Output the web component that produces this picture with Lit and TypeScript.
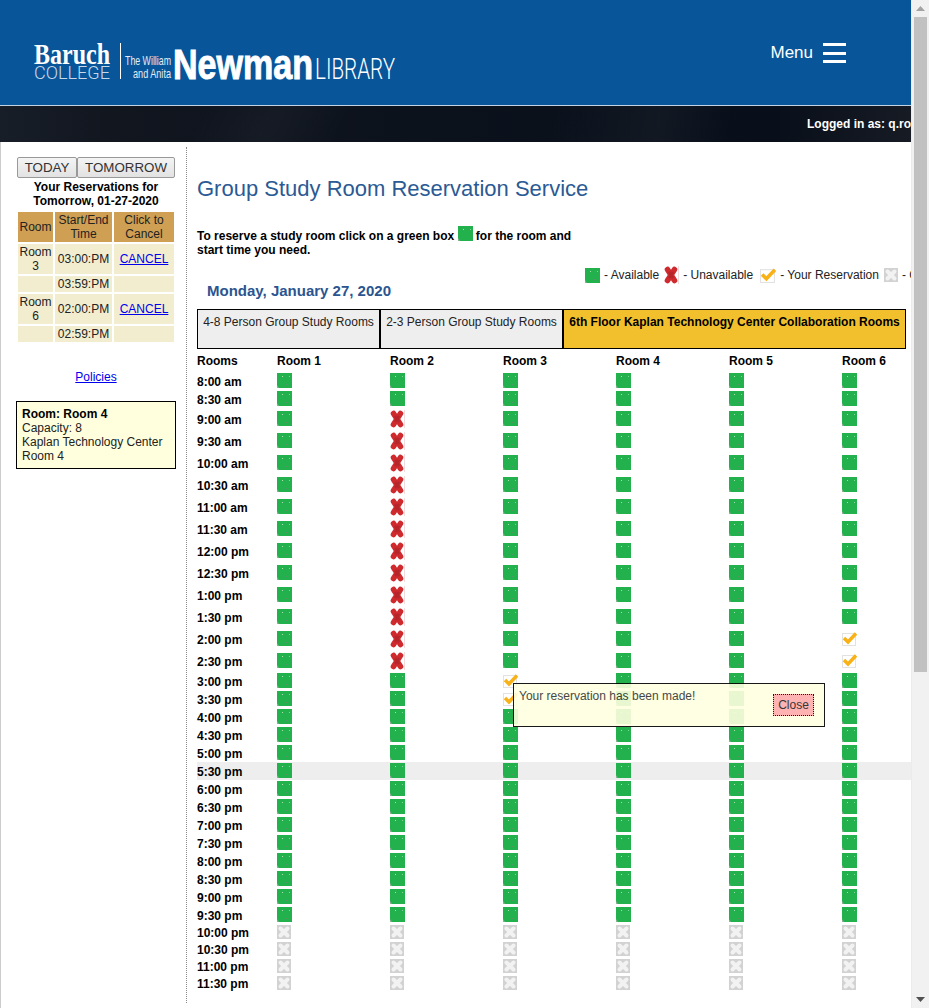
import { LitElement, css, html, svg } from "lit";
import { customElement } from "lit/decorators.js";

type Cell = "a" | "x" | "c" | "g";

const TIMES = [
  "8:00 am", "8:30 am", "9:00 am", "9:30 am", "10:00 am", "10:30 am", "11:00 am", "11:30 am",
  "12:00 pm", "12:30 pm", "1:00 pm", "1:30 pm", "2:00 pm", "2:30 pm", "3:00 pm", "3:30 pm",
  "4:00 pm", "4:30 pm", "5:00 pm", "5:30 pm", "6:00 pm", "6:30 pm", "7:00 pm", "7:30 pm",
  "8:00 pm", "8:30 pm", "9:00 pm", "9:30 pm", "10:00 pm", "10:30 pm", "11:00 pm", "11:30 pm",
];

const ROOMS = [1, 2, 3, 4, 5, 6];

function cellFor(row: number, room: number): Cell {
  if (row >= 28) return "g";
  if (room === 2 && row >= 2 && row <= 13) return "x";
  if (room === 3 && (row === 14 || row === 15)) return "c";
  if (room === 6 && (row === 12 || row === 13)) return "c";
  return "a";
}

function rowClass(row: number) {
  if (row >= 28) return "row short";
  if (row >= 2 && row <= 13) return "row tall";
  return row === 19 ? "row hl" : "row";
}

const green = svg`<svg class="ico" width="15" height="15" viewBox="0 0 15 15">
  <rect width="15" height="15" fill="#22b14c"/>
  <path d="M0 12v3h2z" fill="#8fae98"/>
  <rect x="5" y="3" width="1" height="1" fill="#a8e0b8"/>
  <rect x="12" y="3" width="1" height="1" fill="#7fd29a"/>
  <rect x="9" y="11" width="1" height="1" fill="#5f8f6e"/>
</svg>`;

const red = svg`<svg class="ico" width="15" height="18" viewBox="0 0 15 18">
  <path d="M3.500 3.500 10.500 14.500M10.500 3.500 3.500 14.500" stroke="#cf2a2e" stroke-width="5.600" stroke-linecap="round" fill="none"/>
  <path d="M5 6 9 12M9 6 5 12" stroke="#b5262a" stroke-width="2.400" fill="none"/>
  <rect x="14" y="0" width="1" height="18" fill="#f0dcdc"/>
</svg>`;

const check = svg`<svg class="ico chk" width="15" height="15" viewBox="0 0 15 15">
  <rect x=".5" y="2.500" width="13" height="12" fill="#fff" stroke="#e2e2e2"/>
  <path d="M2 7 6 11 14 2.500" stroke="#f8b116" stroke-width="3.400" fill="none"/>
</svg>`;

const closed = svg`<svg class="ico" width="14" height="14" viewBox="0 0 14 14">
  <rect width="14" height="14" fill="#d2d2d2"/>
  <path d="M3.500 3.500 10.500 10.500M10.500 3.500 3.500 10.500" stroke="#f2f2f2" stroke-width="4" stroke-linecap="round"/>
</svg>`;

const ICONS = { a: green, x: red, c: check, g: closed };

@customElement("app-root")
export class AppRoot extends LitElement {
  static styles = css`
    :host {
      display: block;
      position: relative;
      height: 1008px;
      overflow: hidden;
      font-family: "Liberation Sans", Arial, sans-serif;
      font-size: 12px;
      line-height: 14px;
      color: #000;
      background: #fff;
    }
    .frame {
      display: flex;
      height: 1008px;
    }
    .page {
      width: 912px;
      flex: none;
      overflow: hidden;
    }
    .scrollbar {
      width: 17px;
      flex: none;
      background: #f1f1f1;
      display: flex;
      flex-direction: column;
      align-items: center;
      box-shadow: -1px 0 0 #ebebeb;
    }
    .arrow {
      height: 17px;
      width: 100%;
      display: flex;
      align-items: center;
      justify-content: center;
      flex: none;
    }
    .thumb {
      width: 13px;
      height: 655px;
      background: #c1c1c1;
      flex: none;
    }
    .spacer {
      flex: 1;
    }
    .top {
      height: 105px;
      background: #08559a;
      display: flex;
      justify-content: space-between;
      align-items: flex-start;
      border-bottom: 1px solid #c3d3e3;
    }
    .logo {
      display: block;
    }
    .menu {
      display: flex;
      align-items: center;
      gap: 10px;
      margin: 43px 66px 0 0;
      color: #fff;
      font-size: 17px;
      line-height: 20px;
    }
    .burger {
      width: 23px;
      height: 20px;
      display: flex;
      flex-direction: column;
      justify-content: space-between;
    }
    .burger i {
      display: block;
      height: 3px;
      background: #fff;
    }
    .band {
      box-sizing: border-box;
      height: 36px;
      padding-bottom: 1px;
      display: flex;
      align-items: center;
      justify-content: flex-end;
      overflow: hidden;
      background:
        linear-gradient(115deg, transparent 0 22%, rgba(255, 255, 255, 0.03) 30%, transparent 38%),
        linear-gradient(100deg, transparent 60%, rgba(255, 255, 255, 0.035) 72%, transparent 80%),
        linear-gradient(90deg, #181e28 0, #11161f 12%, #0c121c 45%, #090f1a 85%, #161b24 100%);
    }
    .who {
      width: 105px;
      flex: none;
      color: #fff;
      font-weight: bold;
      white-space: nowrap;
    }
    .body {
      display: flex;
      align-items: flex-start;
    }
    .side {
      box-sizing: border-box;
      flex: none;
      width: 187px;
      height: 866px;
      border-left: 1px solid #ccc;
      padding: 15px 11px 0 15px;
      position: relative;
    }
    .side::after {
      content: "";
      position: absolute;
      right: 0;
      top: 5px;
      bottom: 5px;
      border-right: 1px dotted #8a8a8a;
    }
    .days {
      display: flex;
      justify-content: center;
    }
    .days button {
      height: 21px;
      padding: 0;
      border: 1px solid #999;
      border-radius: 2px;
      background: linear-gradient(#f4f4f4, #e2e2e2);
      font: 13.33px "Liberation Sans", Arial, sans-serif;
      color: #333;
    }
    .today {
      width: 60px;
    }
    .tomorrow {
      width: 98px;
    }
    .yours {
      margin: 2px 0 0;
      font-weight: bold;
      text-align: center;
    }
    .mine {
      border-collapse: separate;
      border-spacing: 2px;
      width: 160px;
      margin-top: 2px;
      table-layout: fixed;
      color: #222;
    }
    .mine th,
    .mine td {
      padding: 1px 0;
      font-weight: normal;
      text-align: center;
      background: #f2edcf;
    }
    .mine th {
      background: #cf9f54;
    }
    a {
      color: #00e;
    }
    .policies {
      display: block;
      margin-top: 26px;
      text-align: center;
    }
    .roombox {
      box-sizing: border-box;
      width: 160px;
      height: 68px;
      margin-top: 17px;
      padding: 5px;
      border: 1px solid #000;
      background: #ffffdd;
      color: #222;
    }
    .roombox b {
      color: #000;
      display: block;
    }
    .main {
      flex: none;
      width: 725px;
      box-sizing: border-box;
      padding-left: 10px;
      overflow: hidden;
    }
    h1 {
      margin: 33px 0 0;
      font-size: 22px;
      line-height: 28px;
      font-weight: normal;
      color: #2b5a94;
      white-space: nowrap;
    }
    .intro {
      width: 385px;
      margin: 23px 0 0;
      font-weight: bold;
    }
    .intro .ico {
      display: inline-block;
      vertical-align: -1px;
    }
    .legend {
      display: flex;
      align-items: center;
      height: 18px;
      margin: 9px 0 0 388px;
      white-space: nowrap;
      color: #222;
    }
    .legend .ico {
      flex: none;
    }
    .legend .chk {
      width: 16px;
      height: 16px;
      margin-left: 2px;
    }
    .legend span {
      margin: 0 5px 0 4px;
    }
    .date {
      margin: -2px 0 0 10px;
      font-size: 15px;
      line-height: 18px;
      font-weight: bold;
      color: #2b5590;
    }
    .tabs {
      display: flex;
      margin-top: 9px;
      height: 40px;
    }
    .tab {
      box-sizing: border-box;
      flex: none;
      width: 183px;
      padding: 5px;
      border: 1px solid #000;
      background: #eee;
      color: #222;
      text-align: center;
      white-space: nowrap;
    }
    .tab.on {
      width: 343px;
      background: #f3c02d;
      color: #000;
      font-weight: bold;
    }
    .grid {
      margin-top: 2px;
    }
    .row {
      display: grid;
      grid-template-columns: 80px repeat(6, 113px);
      height: 18px;
      font-weight: bold;
      line-height: 20px;
      white-space: nowrap;
    }
    .row .cell {
      padding-top: 1px;
      height: 15px;
    }
    .ico {
      display: block;
    }
    .row.head {
      height: 19px;
      line-height: 18px;
      margin-bottom: 2px;
      align-items: center;
    }
    .row.tall {
      height: 22px;
      line-height: 24px;
    }
    .row.tall .cell {
      padding-top: 2px;
    }
    .row.short {
      height: 17px;
      line-height: 18px;
    }
    .row.hl {
      background: #eee;
    }
    .row.tall .ok {
      padding-top: 3px;
    }
    .toast {
      position: absolute;
      box-sizing: border-box;
      left: 513px;
      top: 683px;
      width: 312px;
      height: 44px;
      padding: 5px;
      border: 1px solid #000;
      background: #ffffe0;
      color: #333;
      opacity: 0.9;
    }
    .close {
      position: absolute;
      right: 10px;
      top: 10px;
      box-sizing: border-box;
      width: 41px;
      height: 22px;
      border: 1px dotted #000;
      background: #ffaaaa;
      text-align: center;
      line-height: 20px;
      color: #222;
    }
  `;

  private logo() {
    return svg`<svg class="logo" width="420" height="105" viewBox="0 0 420 105">
      <g fill="#fff">
        <text x="34" y="64" font-family="Liberation Serif" font-weight="bold" font-size="29" textLength="76" lengthAdjust="spacingAndGlyphs">Baruch</text>
        <text x="34" y="79" font-family="Roboto" font-weight="300" font-size="18" fill="#c9d8e8" textLength="76" lengthAdjust="spacingAndGlyphs">COLLEGE</text>
        <rect x="120" y="43" width="1" height="36"/>
        <text x="125" y="65" font-family="Liberation Sans" font-size="13" fill="#e4ecf4" textLength="46" lengthAdjust="spacingAndGlyphs">The William</text>
        <text x="133" y="78" font-family="Liberation Sans" font-size="13" fill="#e4ecf4" textLength="38" lengthAdjust="spacingAndGlyphs">and Anita</text>
        <text x="173" y="79" font-family="Liberation Sans" font-weight="bold" font-size="43" stroke="#fff" stroke-width="1" textLength="140" lengthAdjust="spacingAndGlyphs">Newman</text>
        <text x="315" y="78.500" font-family="Roboto" font-weight="300" font-size="30" textLength="80" lengthAdjust="spacingAndGlyphs">LIBRARY</text>
      </g>
    </svg>`;
  }

  private sidebar() {
    return html`
      <aside class="side">
        <div class="days">
          <button class="today">TODAY</button><button class="tomorrow">TOMORROW</button>
        </div>
        <p class="yours">Your Reservations for<br />Tomorrow, 01-27-2020</p>
        <table class="mine">
          <colgroup><col style="width:35px" /><col style="width:57px" /><col style="width:60px" /></colgroup>
          <tr><th>Room</th><th>Start/End Time</th><th>Click to Cancel</th></tr>
          <tr><td>Room 3</td><td>03:00:PM</td><td><a href="#">CANCEL</a></td></tr>
          <tr><td></td><td>03:59:PM</td><td></td></tr>
          <tr><td>Room 6</td><td>02:00:PM</td><td><a href="#">CANCEL</a></td></tr>
          <tr><td></td><td>02:59:PM</td><td></td></tr>
        </table>
        <a class="policies" href="#">Policies</a>
        <div class="roombox">
          <b>Room: Room 4</b>
          Capacity: 8<br />Kaplan Technology Center<br />Room 4
        </div>
      </aside>
    `;
  }

  render() {
    return html`
      <div class="frame">
        <div class="page">
          <header class="top">
            ${this.logo()}
            <div class="menu">Menu <span class="burger"><i></i><i></i><i></i></span></div>
          </header>
          <div class="band"><div class="who">Logged in as: q.rom</div></div>
          <div class="body">
            ${this.sidebar()}
            <main class="main">
              <h1>Group Study Room Reservation Service</h1>
              <p class="intro">To reserve a study room click on a green box ${green} for the room and start time you need.</p>
              <div class="legend">
                ${green}<span>- Available</span>${red}<span>- Unavailable</span>${check}<span>- Your Reservation</span>${closed}<span>- Closed</span>
              </div>
              <div class="date">Monday, January 27, 2020</div>
              <div class="tabs">
                <div class="tab">4-8 Person Group Study Rooms</div>
                <div class="tab">2-3 Person Group Study Rooms</div>
                <div class="tab on">6th Floor Kaplan Technology Center Collaboration Rooms</div>
              </div>
              <div class="grid">
                <div class="row head">
                  <div>Rooms</div>
                  ${ROOMS.map((r) => html`<div>Room ${r}</div>`)}
                </div>
                ${TIMES.map(
                  (t, i) => html`
                    <div class=${rowClass(i)}>
                      <div>${t}</div>
                      ${ROOMS.map((r) => {
                        const c = cellFor(i, r);
                        return html`<div class="cell ${c === "x" ? "" : "ok"}">${ICONS[c]}</div>`;
                      })}
                    </div>
                  `,
                )}
              </div>
            </main>
          </div>
        </div>
        <div class="scrollbar">
          <div class="arrow"><svg width="9" height="5" viewBox="0 0 9 5"><path d="M4.500 0 9 5H0z" fill="#a3a3a3"/></svg></div>
          <div class="thumb"></div>
          <div class="spacer"></div>
          <div class="arrow"><svg width="9" height="5" viewBox="0 0 9 5"><path d="M0 0h9L4.500 5z" fill="#505050"/></svg></div>
        </div>
      </div>
      <div class="toast">Your reservation has been made!<div class="close">Close</div></div>
    `;
  }
}
